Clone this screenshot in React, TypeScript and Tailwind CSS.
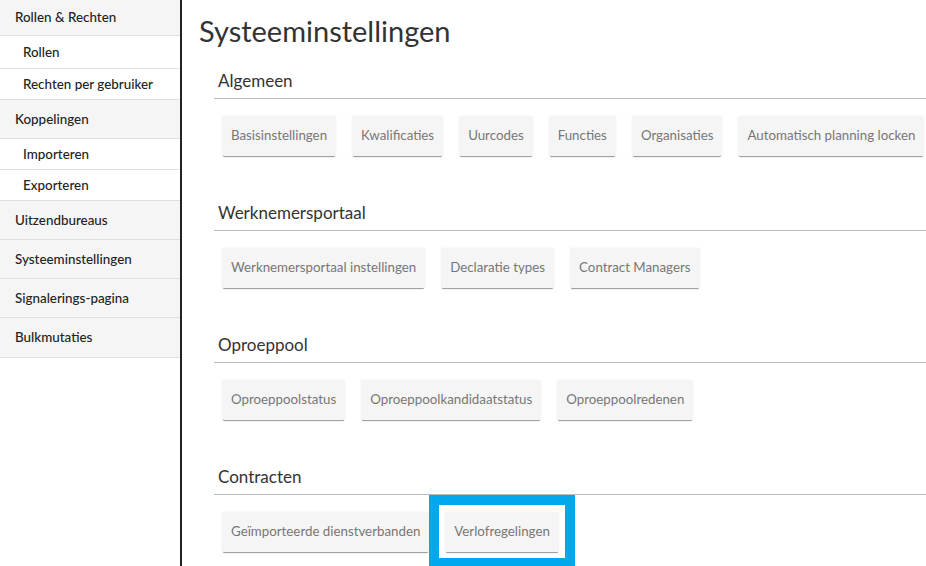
const sidebar = [
  { label: "Rollen & Rechten", cls: "h-[36px] pl-[15px] bg-[#f5f5f5]" },
  { label: "Rollen", cls: "h-[33px] pl-[23px] bg-white" },
  { label: "Rechten per gebruiker", cls: "h-[31px] pl-[23px] bg-white" },
  { label: "Koppelingen", cls: "h-[39px] pl-[15px] bg-[#f5f5f5]" },
  { label: "Importeren", cls: "h-[31px] pl-[23px] bg-white" },
  { label: "Exporteren", cls: "h-[31px] pl-[23px] bg-white" },
  { label: "Uitzendbureaus", cls: "h-[39px] pl-[15px] bg-[#f5f5f5]" },
  { label: "Systeeminstellingen", cls: "h-[39px] pl-[15px] bg-[#f5f5f5]" },
  { label: "Signalerings-pagina", cls: "h-[39px] pl-[15px] bg-[#f5f5f5]" },
  { label: "Bulkmutaties", cls: "h-[40px] pl-[15px] bg-[#f5f5f5]" },
];

const sections = [
  {
    title: "Algemeen",
    buttons: ["Basisinstellingen", "Kwalificaties", "Uurcodes", "Functies", "Organisaties", "Automatisch planning locken"],
  },
  {
    title: "Werknemersportaal",
    buttons: ["Werknemersportaal instellingen", "Declaratie types", "Contract Managers"],
  },
  {
    title: "Oproeppool",
    buttons: ["Oproeppoolstatus", "Oproeppoolkandidaatstatus", "Oproeppoolredenen"],
  },
  {
    title: "Contracten",
    buttons: ["Geïmporteerde dienstverbanden", "Verlofregelingen"],
  },
];

function SettingButton({ label, highlight }: { label: string; highlight?: boolean }) {
  return (
    <div className="relative">
      <button className="h-10 px-[9px] bg-[#f5f5f5] text-[#777] text-[13.3px] rounded-[2px] shadow-[0_2px_1px_-1px_rgba(0,0,0,0.4),0_0_2px_rgba(0,0,0,0.08)] whitespace-nowrap">
        {label}
      </button>
      {/* highlight frame drawn over the button */}
      {highlight && (
        <div className="absolute -top-[17px] -left-[16px] -right-[16px] -bottom-[16px] border-[10px] border-[#00a9ed] pointer-events-none" />
      )}
    </div>
  );
}

export default function App() {
  return (
    <div
      className="flex min-h-screen bg-white text-[#222]"
      style={{ fontFamily: "Lato, 'Liberation Sans', sans-serif" }}
    >
      {/* Sidebar */}
      <aside className="w-[182px] shrink-0 border-r-2 border-[#222]">
        {sidebar.map((item) => (
          <div
            key={item.label}
            className={`${item.cls} flex items-center border-b border-[#e0e0e0] text-[13.4px] font-medium`}
          >
            {item.label}
          </div>
        ))}
      </aside>

      {/* Main */}
      <main className="flex-1 pl-[17px] pt-[13px] overflow-hidden">
        <h1 className="text-[29px] leading-9 text-[#333]">Systeeminstellingen</h1>
        <div className="ml-[15px]">
          {sections.map((s, i) => (
            <section key={s.title} className={i === 0 ? "mt-[20px]" : "mt-[45px]"}>
              <h2 className="pl-1 pb-[5px] text-[17px] leading-6 text-[#333] border-b border-[#bbb]">{s.title}</h2>
              <div className="flex gap-4 pl-2 mt-[17px]">
                {s.buttons.map((b) => (
                  <SettingButton key={b} label={b} highlight={b === "Verlofregelingen"} />
                ))}
              </div>
            </section>
          ))}
        </div>
      </main>
    </div>
  );
}
